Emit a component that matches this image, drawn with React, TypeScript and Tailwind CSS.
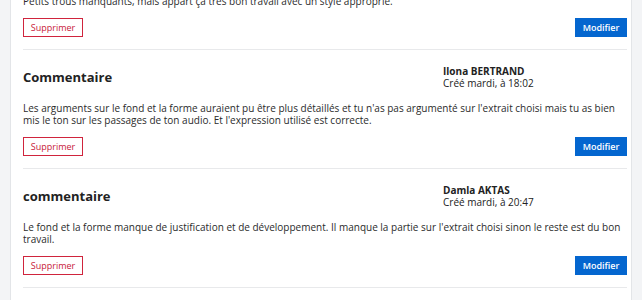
import React from 'react';

type Comment = {
  id: number;
  title?: string;
  author?: string;
  created?: string;
  body: string;
};

const comments: Comment[] = [
  {
    id: 1,
    title: 'Commentaire',
    author: 'Lina MARTIN',
    created: 'Créé mardi, à 17:40',
    body: 'Petits trous manquants, mais appart ça très bon travail avec un style approprié.',
  },
  {
    id: 2,
    title: 'Commentaire',
    author: 'Ilona BERTRAND',
    created: 'Créé mardi, à 18:02',
    body: "Les arguments sur le fond et la forme auraient pu être plus détaillés et tu n'as pas argumenté sur l'extrait choisi mais tu as bien mis le ton sur les passages de ton audio. Et l'expression utilisé est correcte.",
  },
  {
    id: 3,
    title: 'commentaire',
    author: 'Damla AKTAS',
    created: 'Créé mardi, à 20:47',
    body: "Le fond et la forme manque de justification et de développement. Il manque la partie sur l'extrait choisi sinon le reste est du bon travail.",
  },
];

function CommentItem({ comment }: { comment: Comment }) {
  return (
    <div className="pt-[15px] pb-[12px] border-b border-[#e8e9eb]">
      {/* Header */}
      <div className="flex items-center h-[24px]">
        <h2 className="w-[420px] text-[13px] font-bold text-[#222] leading-none">{comment.title}</h2>
        <div className="text-[10px] leading-[12px] text-[#222]">
          <div className="font-bold">{comment.author}</div>
          <div>{comment.created}</div>
        </div>
      </div>

      <p className="mt-[13px] text-[10px] leading-[12px] text-[#2b2b2b]">{comment.body}</p>

      {/* Actions */}
      <div className="mt-[11px] flex items-center justify-between">
        <button className="h-[19px] w-[60px] border border-[#d0243d] text-[#c8203a] text-[9px] leading-none bg-white">
          Supprimer
        </button>
        <button className="h-[19px] w-[52px] bg-[#0466cf] text-white text-[9px] font-semibold leading-none">
          Modifier
        </button>
      </div>
    </div>
  );
}

export default function App() {
  return (
    <div
      className="h-[300px] w-[642px] overflow-hidden bg-[#f3f4f6] flex"
      style={{ fontFamily: '"Open Sans", "Liberation Sans", sans-serif' }}
    >
      <div className="w-[10px] shrink-0" />
      <div className="w-[622px] shrink-0 bg-white border-x border-[#e3e5e8] pl-[12px] pr-[4px]">
        <div className="-mt-[57px]">
          {comments.map(c => (
            <CommentItem key={c.id} comment={c} />
          ))}
        </div>
      </div>
    </div>
  );
}
